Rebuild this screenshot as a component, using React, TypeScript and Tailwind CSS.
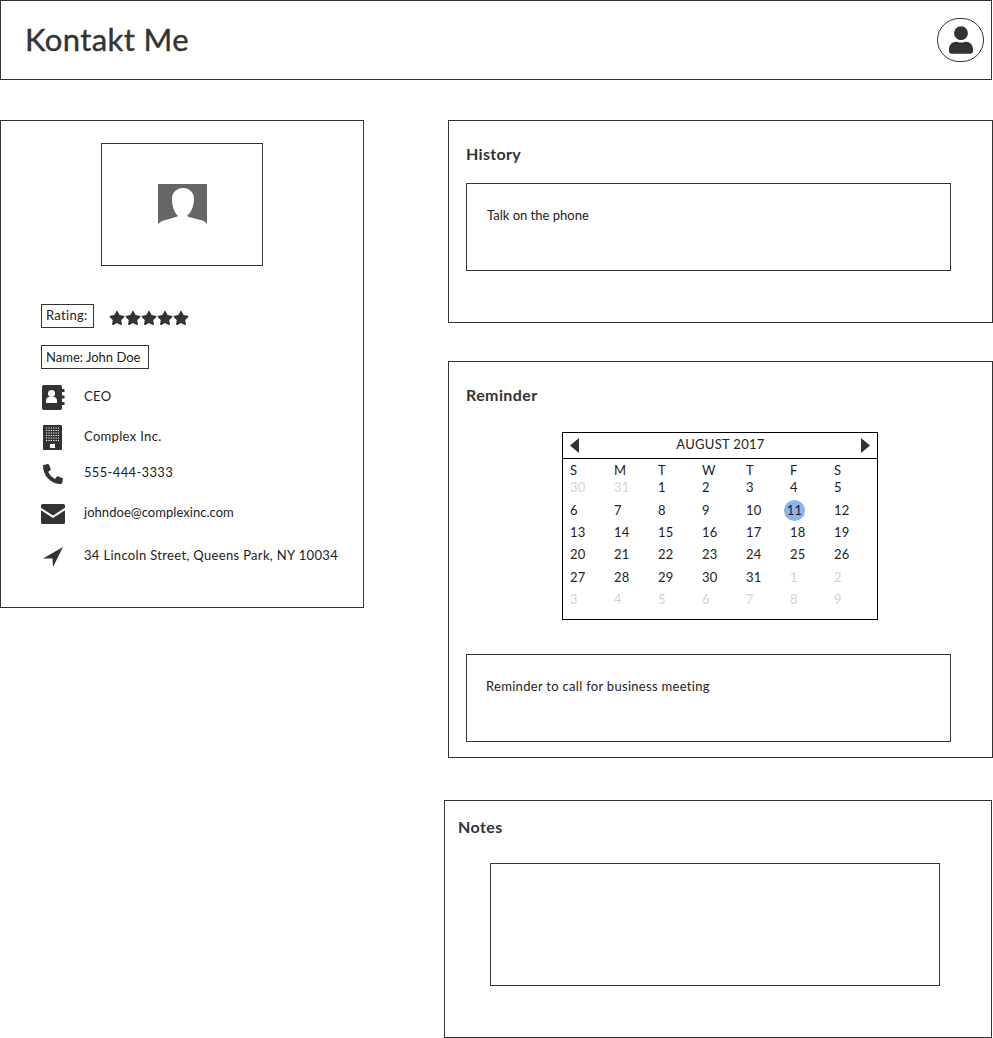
import { FaStar, FaUser, FaPhoneAlt } from "react-icons/fa";

const days = [
  [30, 31, 1, 2, 3, 4, 5],
  [6, 7, 8, 9, 10, 11, 12],
  [13, 14, 15, 16, 17, 18, 19],
  [20, 21, 22, 23, 24, 25, 26],
  [27, 28, 29, 30, 31, 1, 2],
  [3, 4, 5, 6, 7, 8, 9],
];

const Calendar = () => {
  return (
    <div className="w-[316px] h-[188px] ml-[96px] border border-black text-[13px] tracking-[0.3px] text-[#222]">
      <div className="h-[26px] pl-[7px] pr-[7px] flex items-center justify-between border-b border-black">
        <svg viewBox="0 0 9 15" className="w-[9px] h-[15px] fill-[#333]">
          <path d="M9 0v15L0 7.500z" />
        </svg>
        <span className="-mt-[2px] ml-px">AUGUST 2017</span>
        <svg viewBox="0 0 9 15" className="w-[9px] h-[15px] fill-[#333]">
          <path d="M0 0v15l9-7.500z" />
        </svg>
      </div>
      <div className="grid grid-cols-[repeat(7,44px)] pl-[7px] h-[19px] pt-[2px] items-center">
        {["S", "M", "T", "W", "T", "F", "S"].map((d, i) => (
          <span key={i}>{d}</span>
        ))}
      </div>
      {days.map((row, r) => (
        <div key={r} className="grid grid-cols-[repeat(7,44px)] pl-[7px] h-[22.3px] items-center -translate-y-[1px]">
          {row.map((d, i) => {
            const muted = (r === 0 && d > 20) || (r === 4 && d < 10) || r === 5;
            const today = r === 1 && d === 11;
            return (
              <span key={i} className={muted ? "text-[#d4d4d4]" : ""}>
                {today ? (
                  <span className="relative -ml-[6px] flex w-[21px] h-[21px] items-center justify-center rounded-full bg-[#8ab4ee]">
                    {d}
                  </span>
                ) : (
                  d
                )}
              </span>
            );
          })}
        </div>
      ))}
    </div>
  );
};

const AddressIcon = () => (
  <svg viewBox="0 0 24 25" className="w-6 h-[25px] fill-[#333]">
    <path d="M3 0h16a2 2 0 0 1 2 2v21a2 2 0 0 1-2 2H3a2 2 0 0 1-2-2V2a2 2 0 0 1 2-2z" />
    <path d="M21 4h2.500v3H21zM21 10.500h2.500v3H21zM21 17h2.500v3H21z" />
    <circle cx="10.500" cy="8.500" r="3.500" fill="#fff" />
    <path d="M5 18v-2.500c0-2 1.500-3.500 3-3.500h5c1.500 0 3 1.500 3 3.500V18z" fill="#fff" />
  </svg>
);

const BuildingIcon = () => (
  <svg viewBox="0 0 19 25" className="w-[19px] h-[25px] ml-[2px]">
    <rect width="19" height="25" rx="1" fill="#333" />
    <path
      d="M3 3h13M3 5.500h13M3 8h13M3 10.500h13M3 13h13M3 15.500h13"
      stroke="#fff"
      strokeWidth="1"
      strokeDasharray="1.200 1.200"
    />
    <rect x="7" y="19" width="5" height="4" fill="#fff" />
  </svg>
);

const EnvelopeIcon = () => (
  <svg viewBox="0 0 24 20" className="w-6 h-5 fill-[#333]">
    <path d="M1.500 0h21A1.500 1.500 0 0 1 24 1.500v2.300L12 11.500 0 3.800V1.500A1.500 1.500 0 0 1 1.500 0z" />
    <path d="M0 6.200l12 7.700 12-7.700V18.500a1.500 1.500 0 0 1-1.500 1.500h-21A1.500 1.500 0 0 1 0 18.500z" />
  </svg>
);

const ArrowIcon = () => (
  <svg viewBox="0 0 20 20" className="w-5 h-5 ml-[2px] fill-[#333]">
    <path d="M20 0L0 11.500h9.500L10 20z" />
  </svg>
);

const contacts = [
  { icon: <AddressIcon />, text: "CEO", row: "h-[25px] mt-4", label: "tracking-[0.33px] -mt-[2px]" },
  { icon: <BuildingIcon />, text: "Complex Inc.", row: "h-[25px] mt-[15px]", label: "tracking-[0.33px] -mt-[2px]" },
  { icon: <FaPhoneAlt className="w-5 h-5 ml-[2px] text-[#333] -scale-x-100 rotate-90" />, text: "555-444-3333", row: "h-5 mt-[14px]", label: "tracking-[0.33px] -mt-[2px]" },
  { icon: <EnvelopeIcon />, text: "johndoe@complexinc.com", row: "h-5 mt-5", label: "tracking-[0.04px] -mt-[3px]" },
  { icon: <ArrowIcon />, text: "34 Lincoln Street, Queens Park, NY 10034", row: "h-5 mt-[23px]", label: "tracking-[0.33px] -mt-[3px]" },
];

const App = () => {
  return (
    <div
      className="w-[993px] h-[1038px] overflow-hidden bg-white text-[#222]"
      style={{ fontFamily: '"Lato", "Liberation Sans", sans-serif' }}
    >
      <header className="w-[992px] h-[80px] border border-[#333] pl-6 pr-[7px] flex items-center justify-between">
        <h1 className="text-[31px] -mt-[2px] text-[#333] tracking-[0.4px] [-webkit-text-stroke:0.4px_#333]">Kontakt Me</h1>
        <div className="w-[47px] h-[44px] -mt-[1px] rounded-full border border-[#333] flex items-center justify-center">
          <FaUser className="w-6 h-7 text-[#333]" />
        </div>
      </header>

      <div className="flex mt-10 items-start">
        <aside className="w-[364px] h-[488px] border border-[#333] pt-[22px] pl-10 shrink-0">
          <div className="w-[162px] h-[123px] ml-[60px] border border-[#333] flex items-center justify-center">
            <svg viewBox="0 0 49 40" className="w-[49px] h-10 -mt-[1px]">
              <path
                fill="#666"
                d="M0 0h49v40l-3-3-15-4-2-1c2-2 7-7 7-17 0-7-5-11-11-11S14 8 14 15c0 10 4 15 6 17l-2 1-14 4-4 3z"
              />
            </svg>
          </div>
          <div className="mt-[38px] flex items-center">
            <span className="h-6 w-[53px] border border-[#333] text-[13px] tracking-[0.3px] pl-1 leading-[20px]">Rating:</span>
            <div className="ml-[15px] mt-[3px] flex">
              {[0, 1, 2, 3, 4].map((s) => (
                <FaStar key={s} className="w-4 h-4 text-[#333]" />
              ))}
            </div>
          </div>
          <div className="mt-[17px] w-[108px] h-6 border border-[#333] text-[13px] pl-1 leading-[22px]">Name: John Doe</div>
          {contacts.map((c) => (
            <div key={c.text} className={`flex items-center ${c.row}`}>
              <span className="w-[43px] shrink-0 flex justify-start">{c.icon}</span>
              <span className={`text-[13px] whitespace-nowrap ${c.label}`}>{c.text}</span>
            </div>
          ))}
        </aside>

        <main className="ml-[84px] w-[545px] shrink-0">
          <section className="h-[203px] border border-[#333] pl-[17px] pt-[23px]">
            <h2 className="text-[16px] font-bold leading-5 text-[#333] tracking-[0.3px]">History</h2>
            <div className="mt-[19px] w-[485px] h-[88px] border border-[#333] pl-5 pt-[23px] text-[13px] leading-4">
              Talk on the phone
            </div>
          </section>

          <section className="mt-[38px] h-[397px] border border-[#333] pl-[17px] pt-[23px] pb-[15px]">
            <h2 className="text-[16px] font-bold leading-5 text-[#333] tracking-[0.4px]">Reminder</h2>
            <div className="w-[485px] mt-[27px]">
              <Calendar />
              <div className="mt-[34px] h-[88px] border border-[#333] pl-[19px] pt-[23px] text-[13px] tracking-[0.3px] leading-4">
                Reminder to call for business meeting
              </div>
            </div>
          </section>

          <section className="mt-[42px] -ml-1 w-[548px] h-[238px] border border-[#333] pl-[13px] pt-4">
            <h2 className="text-[16px] font-bold leading-5 text-[#333] tracking-[0.4px]">Notes</h2>
            <div className="mt-[26px] ml-[32px] w-[450px] h-[123px] border border-[#333]" />
          </section>
        </main>
      </div>
    </div>
  );
};

export default App;
